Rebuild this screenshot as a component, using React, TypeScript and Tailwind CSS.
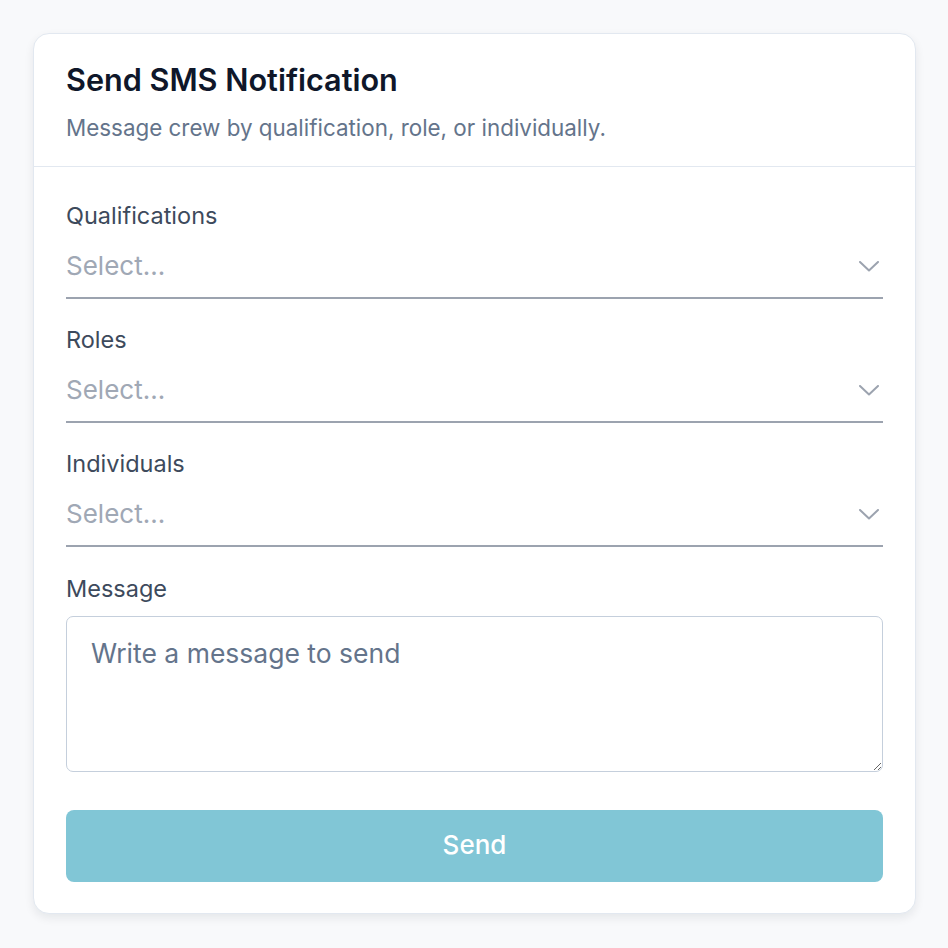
import React from "react";

type SelectFieldProps = {
  label: string;
  className?: string;
};

function ChevronDown() {
  return (
    <svg width="20" height="11" viewBox="0 0 20 11" fill="none" className="shrink-0">
      <path d="M1 1l9 8.5L19 1" stroke="#9ca3af" strokeWidth="2" strokeLinecap="round" strokeLinejoin="round" />
    </svg>
  );
}

function SelectField({ label, className = "" }: SelectFieldProps) {
  return (
    <div className={className}>
      <label className="block text-[23.5px] leading-[28px] text-[#3d4a5c]">{label}</label>
      <div className="flex items-center justify-between border-b-2 border-[#9ca3af] pt-[18px] pb-[13px] pr-[4px]">
        <span className="text-[26px] leading-[36px] text-[#a0a8b5]">Select...</span>
        <ChevronDown />
      </div>
    </div>
  );
}

export default function App() {
  return (
    <div
      className="min-h-screen bg-[#f8f9fb] p-[33px]"
      style={{ fontFamily: "Inter, 'Noto Sans', sans-serif" }}
    >
      <div className="w-[883px] rounded-[16px] border border-[#e2e8f0] bg-white shadow-[0_4px_10px_rgba(15,23,42,0.08)]">
        <div className="border-b border-[#e2e8f0] px-[32px] pt-[28px] pb-[24px]">
          <h1 className="text-[30.6px] leading-[36px] font-semibold text-[#0f172a]">Send SMS Notification</h1>
          <p className="mt-[16px] text-[22.4px] leading-[28px] text-[#64748b]">
            Message crew by qualification, role, or individually.
          </p>
        </div>

        <div className="px-[32px] pt-[35px] pb-[31px]">
          <SelectField label="Qualifications" />
          <SelectField label="Roles" className="mt-[27px]" />
          <SelectField label="Individuals" className="mt-[27px]" />

          <div className="mt-[28px]">
            <label className="block text-[23.5px] leading-[28px] text-[#3d4a5c]">Message</label>
            <textarea
              placeholder="Write a message to send"
              className="mt-[13px] block h-[156px] w-full rounded-[7px] border-[1.5px] border-[#c5cfdc] px-[24px] pt-[18px] text-[26.5px] leading-[36px] text-[#334155] outline-none placeholder:text-[#64748b]"
            />
          </div>

          <button
            type="button"
            className="mt-[38px] flex h-[72px] w-full items-center justify-center rounded-[8px] bg-[#81c6d6] pb-[4px] text-[26px] font-medium text-white"
          >
            Send
          </button>
        </div>
      </div>
    </div>
  );
}
